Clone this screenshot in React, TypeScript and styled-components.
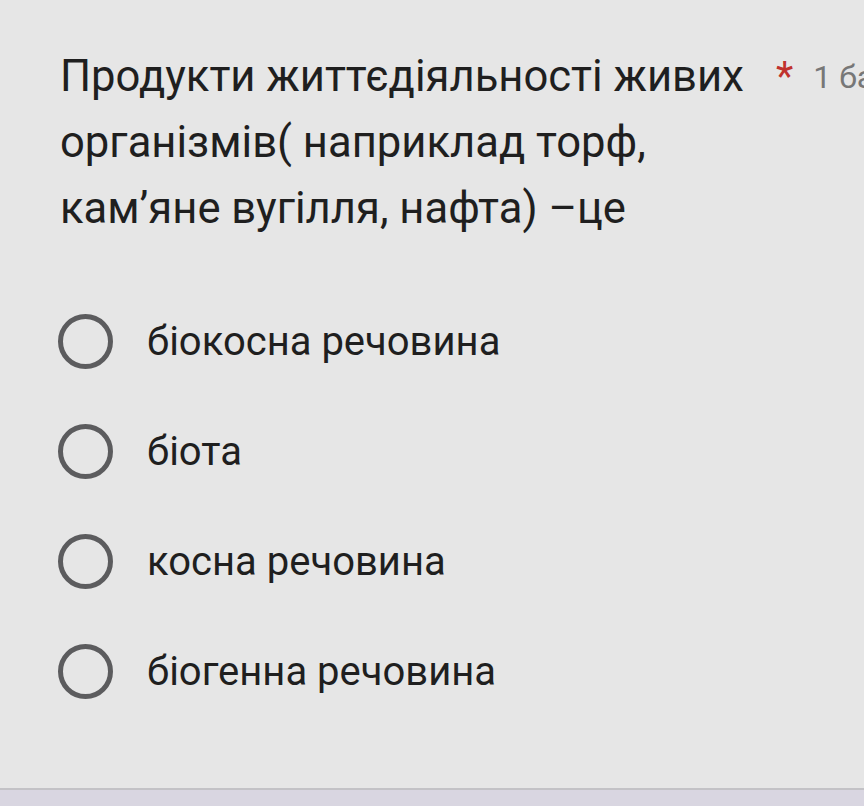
import styled, { createGlobalStyle } from "styled-components";

const GlobalStyle = createGlobalStyle`
  html, body {
    margin: 0;
    padding: 0;
    background: #d9d6e1;
    overflow: hidden;
  }
  body {
    font-family: Roboto, "Noto Sans", sans-serif;
  }
`;

const options = [
  "біокосна речовина",
  "біота",
  "косна речовина",
  "біогенна речовина",
];

const App = () => {
  return (
    <>
      <GlobalStyle />
      <Card>
        <Header>
          <Title>
            Продукти життєдіяльності живих організмів( наприклад торф,
            кам’яне вугілля, нафта) –це
          </Title>
          <Required>*</Required>
          <Points>1 бал</Points>
        </Header>
        <OptionList>
          {options.map((label) => (
            <Option key={label}>
              <Radio />
              <Label>{label}</Label>
            </Option>
          ))}
        </OptionList>
      </Card>
    </>
  );
};

export default App;

const Card = styled.div({
  width: "864px",
  height: "790px",
  boxSizing: "border-box",
  background: "#e6e6e6",
  borderBottom: "2px solid #c3c2c6",
  padding: "44px 0 0 60px",
  overflow: "hidden",
});

const Header = styled.div({
  display: "flex",
  alignItems: "flex-start",
  whiteSpace: "nowrap",
});

const Title = styled.div({
  flex: "0 0 700px",
  whiteSpace: "normal",
  fontSize: "43.6px",
  lineHeight: "66px",
  color: "#1f1f1f",
});

const Required = styled.span({
  fontSize: "40px",
  lineHeight: "66px",
  color: "#c0322d",
  marginLeft: "16px",
});

const Points = styled.span({
  fontSize: "32px",
  lineHeight: "66px",
  color: "#777777",
  marginLeft: "20px",
});

const OptionList = styled.div({
  display: "flex",
  flexDirection: "column",
  gap: "56px",
  marginTop: "72px",
});

const Option = styled.div({
  display: "flex",
  alignItems: "center",
  height: "54px",
});

const Radio = styled.div({
  width: "55px",
  height: "55px",
  flexShrink: 0,
  boxSizing: "border-box",
  borderRadius: "50%",
  border: "5px solid #5c5c5e",
  marginLeft: "-2px",
});

const Label = styled.span({
  marginLeft: "34px",
  fontSize: "40px",
  color: "#1f1f1f",
});
